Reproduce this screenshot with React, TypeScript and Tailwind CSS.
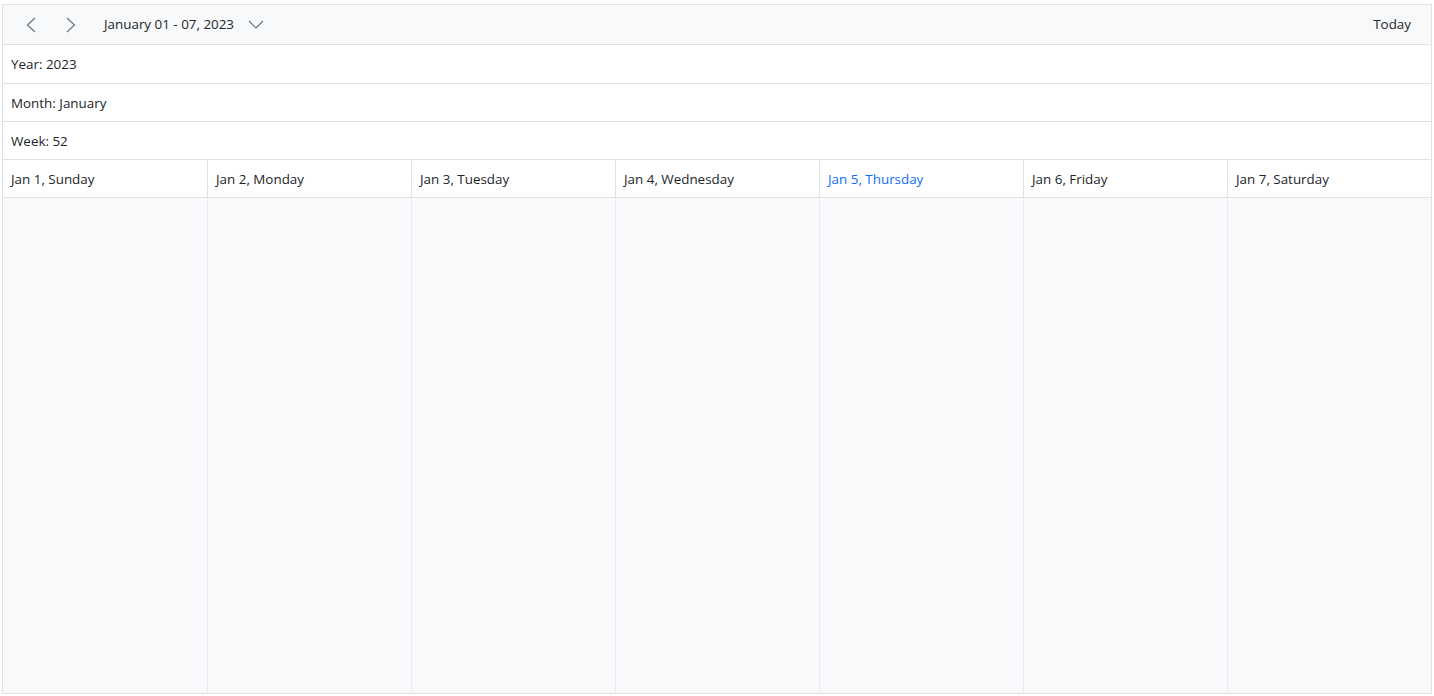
const days = [
  { label: "Jan 1, Sunday" },
  { label: "Jan 2, Monday" },
  { label: "Jan 3, Tuesday" },
  { label: "Jan 4, Wednesday" },
  { label: "Jan 5, Thursday", today: true },
  { label: "Jan 6, Friday" },
  { label: "Jan 7, Saturday" },
];

const Chevron = ({ d, w, h }: { d: string; w: number; h: number }) => (
  <svg width={w} height={h} viewBox={`0 0 ${w} ${h}`} fill="none" stroke="#6c757d" strokeWidth={1.2}>
    <path d={d} />
  </svg>
);

const App = () => {
  return (
    <div
      className="h-[696px] pt-1 px-[2px] pb-[2px] bg-white text-[13.4px] text-[#212529]"
      style={{ fontFamily: '"Segoe UI", "Open Sans", "Noto Sans", sans-serif' }}
    >
      <div className="flex h-full flex-col border border-[#dee2e6]">
        {/* Toolbar */}
        <div className="flex h-10 shrink-0 items-center border-b border-[#dee2e6] bg-[#f8f9fa] pl-[20px] pr-5">
          <button className="flex h-8 w-4 items-center justify-center">
            <Chevron w={12} h={16} d="M10 1 L2.5 8 L10 15" />
          </button>
          <button className="ml-6 flex h-8 w-4 items-center justify-center">
            <Chevron w={12} h={16} d="M2 1 L9.5 8 L2 15" />
          </button>
          <button className="ml-[25px] flex items-center gap-[14px] text-[#212529]">
            <span>January 01 - 07, 2023</span>
            <span className="mt-[2px]">
              <Chevron w={16} h={10} d="M1 1 L8 8 L15 1" />
            </span>
          </button>
          <button className="ml-auto">Today</button>
        </div>

        {/* Info rows */}
        <div className="flex h-[39px] shrink-0 items-center border-b border-[#dee2e6] px-2 pt-px">Year: 2023</div>
        <div className="flex h-[38px] shrink-0 items-center border-b border-[#dee2e6] px-2 pt-px">Month: January</div>
        <div className="flex h-[38px] shrink-0 items-center border-b border-[#dee2e6] px-2 pt-px">Week: 52</div>

        {/* Day headers */}
        <div className="grid h-[38px] shrink-0 grid-cols-7 border-b border-[#dee2e6]">
          {days.map((d, i) => (
            <div
              key={i}
              className={`flex items-center px-2 pt-px ${i > 0 ? "border-l border-[#dee2e6]" : ""} ${
                d.today ? "text-[#0d6efd]" : ""
              }`}
            >
              {d.label}
            </div>
          ))}
        </div>

        {/* Body */}
        <div className="grid flex-1 grid-cols-7 bg-[#f8f9fa]">
          {days.map((_, i) => (
            <div key={i} className={i > 0 ? "border-l border-dotted border-[#dee2e6]" : ""} />
          ))}
        </div>
      </div>
    </div>
  );
};

export default App;
